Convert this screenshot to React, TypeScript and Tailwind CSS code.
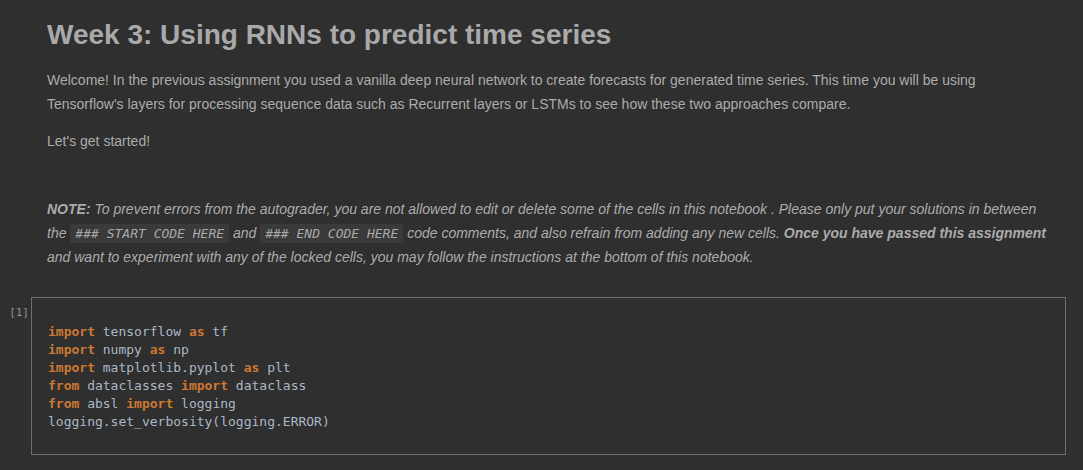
const mono = "font-['DejaVu_Sans_Mono',monospace]";

function Kw({ children }: { children: React.ReactNode }) {
  return <span className="font-bold text-[#cc7832]">{children}</span>;
}

function InlineCode({ children }: { children: React.ReactNode }) {
  return (
    <code className={`${mono} bg-[#3a3a3a] px-[5px] py-[2px] text-[13px] leading-[20px] text-[#a8a8a8] italic`}>
      {children}
    </code>
  );
}

export default function App() {
  return (
    <div className="min-h-[470px] w-full bg-[#2f2f2f] font-['Liberation_Sans',Arial,sans-serif] text-[#ababab]">
      <div className="pl-[47px] pr-[30px] pt-[17px]">
        <h1 className="text-[28px] font-bold leading-[36px] text-[#a9a9a9]">
          Week 3: Using RNNs to predict time series
        </h1>
        <p className="mt-[15px] text-[14px] leading-[24px]">
          Welcome! In the previous assignment you used a vanilla deep neural network to create forecasts for generated time series. This time you will be using Tensorflow's layers for processing sequence data such as Recurrent layers or LSTMs to see how these two approaches compare.
        </p>
        <p className="mt-[13px] text-[14px] leading-[24px]">Let's get started!</p>
        <p className="mt-[44px] text-[14px] italic leading-[24px]">
          <b>NOTE:</b> To prevent errors from the autograder, you are not allowed to edit or delete some of the cells in this notebook . Please only put your solutions in between the <InlineCode>### START CODE HERE</InlineCode> and <InlineCode>### END CODE HERE</InlineCode> code comments, and also refrain from adding any new cells. <b>Once you have passed this assignment</b> and want to experiment with any of the locked cells, you may follow the instructions at the bottom of this notebook.
        </p>
      </div>
      <div className="mt-[28px] flex items-start pr-[17px]">
        <div className={`${mono} w-[31px] pt-[8px] pr-[2px] text-right text-[11px] text-[#8f8f8f]`}>[1]</div>
        <div className="flex-1 border border-[#6e6e6e] px-[16px] pt-[25px] pb-[23px]">
          <pre className={`${mono} text-[13px] leading-[18px] text-[#a9b7c6]`}>
            <Kw>import</Kw> tensorflow <Kw>as</Kw> tf{"\n"}
            <Kw>import</Kw> numpy <Kw>as</Kw> np{"\n"}
            <Kw>import</Kw> matplotlib.pyplot <Kw>as</Kw> plt{"\n"}
            <Kw>from</Kw> dataclasses <Kw>import</Kw> dataclass{"\n"}
            <Kw>from</Kw> absl <Kw>import</Kw> logging{"\n"}
            logging.set_verbosity(logging.ERROR)
          </pre>
        </div>
      </div>
    </div>
  );
}
